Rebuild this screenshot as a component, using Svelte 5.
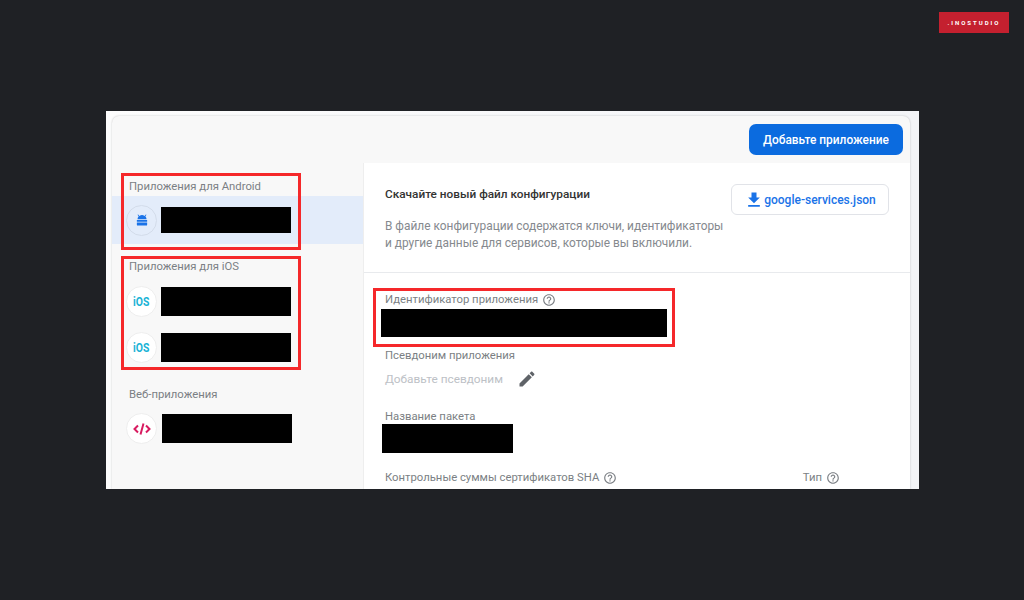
<script lang="ts">
    const help = "M11 18h2v-2h-2v2zm1-16C6.48 2 2 6.48 2 12s4.48 10 10 10 10-4.48 10-10S17.52 2 12 2zm0 18c-4.41 0-8-3.59-8-8s3.59-8 8-8 8 3.59 8 8-3.59 8-8 8zm0-14c-2.21 0-4 1.79-4 4h2c0-1.1.9-2 2-2s2 .9 2 2c0 2-3 1.75-3 5h2c0-2.25 3-2.5 3-5 0-2.21-1.79-4-4-4z";
</script>

<style>
    :global(body) {
        background: #1f2125;
    }

    .page {
        width: 1024px;
        height: 600px;
        overflow: hidden;
        font-family: Roboto, "Liberation Sans", sans-serif;
        font-size: 11.3px;
        color: #7b7f84;
    }

    .page-head {
        height: 111px;
        display: flex;
        justify-content: flex-end;
        align-items: flex-start;
    }

    .logo {
        margin: 12px 15px 0 0;
        width: 70px;
        height: 21px;
        background: #c4202f;
        color: #fff;
        font-size: 6px;
        font-weight: 700;
        letter-spacing: 2px;
        line-height: 21px;
        text-align: center;
    }

    .shot {
        position: relative;
        margin-left: 106px;
        width: 813px;
        height: 378px;
        box-sizing: border-box;
        padding: 5px 9px 0 6px;
        background: linear-gradient(90deg, #fdfdfd 0, #f3f4f7 100%);
        overflow: hidden;
    }

    .console {
        height: 373px;
        background: #f8f8f8;
        border-radius: 7px 7px 0 0;
        box-shadow: 0 0 2px rgba(60, 64, 67, 0.3);
        display: flex;
        flex-direction: column;
    }

    .toolbar {
        height: 47px;
        flex: none;
        box-sizing: border-box;
        padding: 8px 7px 0 0;
        display: flex;
        justify-content: flex-end;
        align-items: flex-start;
    }

    .add {
        width: 154px;
        height: 31px;
        border: none;
        border-radius: 7px;
        background: #0b6bdf;
        color: #fff;
        font: 500 11.9px Roboto, sans-serif;
    }

    .columns {
        flex: 1;
        display: flex;
        min-height: 0;
    }

    .sidebar {
        width: 252px;
        flex: none;
        border-right: 1px solid #eeeeee;
        box-sizing: border-box;
    }

    .group {
        height: 18px;
        line-height: 18px;
        padding-left: 17px;
    }

    .android {
        margin: 15px 0 0;
    }

    .ios {
        margin: 14px 0 2px;
    }

    .web {
        margin: 16px 0 1px;
    }

    .row {
        height: 46px;
        padding-left: 14px;
        display: flex;
        align-items: center;
        gap: 4px;
    }

    .row.active {
        height: 48px;
        background: #e3ecfa;
    }

    .row.shifted {
        height: 47px;
    }

    .circle {
        width: 31px;
        height: 31px;
        flex: none;
        border-radius: 50%;
        background: #fff;
        border: 1px solid #eeeeee;
        box-sizing: border-box;
        display: flex;
        align-items: center;
        justify-content: center;
    }

    .active .circle {
        background: #e3ecfa;
        border-color: #d3dcea;
    }

    .ios-mark {
        color: #1ab3d6;
        font-size: 13px;
        font-weight: 700;
        transform: scaleX(0.8);
    }

    .mask {
        background: #000;
    }

    .row .mask {
        width: 130px;
        height: 29px;
    }

    .row.active .mask {
        height: 26px;
    }

    .row.shifted .mask {
        margin-left: 1px;
    }

    .detail {
        flex: 1;
        background: #fff;
        overflow: hidden;
    }

    .download {
        height: 110px;
        box-sizing: border-box;
        border-bottom: 1px solid #e8eaed;
        padding: 21px 21px 0;
        display: flex;
        justify-content: space-between;
        align-items: flex-start;
    }

    .title {
        margin: 1px 0 15px;
        font-size: 11.8px;
        line-height: 18px;
        font-weight: 500;
        color: #333;
    }

    .note {
        margin: 0;
        width: 346px;
        font-size: 11.9px;
        line-height: 17px;
        color: #85898e;
    }

    .json {
        width: 158px;
        height: 31px;
        flex: none;
        box-sizing: border-box;
        border: 1px solid #e1e3e8;
        border-radius: 6px;
        background: #fff;
        color: #1a73e8;
        font: 500 12px Roboto, sans-serif;
        display: flex;
        align-items: center;
        justify-content: center;
        padding: 0;
    }

    .fields {
        padding: 18px 21px 0;
    }

    .label {
        height: 18px;
        line-height: 18px;
        display: flex;
        align-items: center;
        gap: 4px;
    }

    .id-mask {
        margin-left: -4px;
        width: 286px;
        height: 28px;
    }

    .nick {
        margin-top: 10px;
    }

    .alias {
        margin: 1px 0 16px;
        height: 26px;
        display: flex;
        align-items: center;
        gap: 14px;
        font-size: 11.8px;
        color: #bdc1c6;
    }

    .pkg-mask {
        margin: -2px 0 16px -3px;
        width: 131px;
        height: 29px;
    }

    .sha {
        display: flex;
        justify-content: space-between;
        width: 455px;
    }

    .help {
        display: block;
        fill: #7b7f84;
    }

    .outline {
        position: absolute;
        box-sizing: border-box;
        border: 3px solid #f5282a;
    }

    .outline-android {
        left: 15px;
        top: 62px;
        width: 180px;
        height: 77px;
    }

    .outline-ios {
        left: 15px;
        top: 145px;
        width: 180px;
        height: 114px;
    }

    .outline-id {
        left: 267px;
        top: 177px;
        width: 302px;
        height: 59px;
    }
</style>

<div class="page">
    <header class="page-head">
        <div class="logo">.INOSTUDIO</div>
    </header>

    <div class="shot">
        <div class="console">
            <div class="toolbar">
                <button class="add">Добавьте приложение</button>
            </div>
            <div class="columns">
                <aside class="sidebar">
                    <div class="group android">Приложения для Android</div>
                    <div class="row active">
                        <div class="circle">
                            <svg width="12" height="12" viewBox="0 0 14 14" fill="#1a73e8">
                                <path d="M2.5 0.5 4 2.2A5.5 5.5 0 0 1 10 2.2L11.5 0.5 12.2 1 10.9 2.9C11.6 3.6 12.2 4.6 12.3 6H1.7C1.8 4.6 2.4 3.6 3.1 2.9L1.8 1Z" />
                                <path d="M1 7H13V9H1ZM1 10H13V12.5A1 1 0 0 1 12 13.5H2A1 1 0 0 1 1 12.5Z" />
                            </svg>
                        </div>
                        <div class="mask"></div>
                    </div>

                    <div class="group ios">Приложения для iOS</div>
                    <div class="row">
                        <div class="circle"><span class="ios-mark">iOS</span></div>
                        <div class="mask"></div>
                    </div>
                    <div class="row">
                        <div class="circle"><span class="ios-mark">iOS</span></div>
                        <div class="mask"></div>
                    </div>

                    <div class="group web">Веб-приложения</div>
                    <div class="row shifted">
                        <div class="circle">
                            <svg width="18" height="12" viewBox="0 0 18 12" fill="none" stroke="#d81b60" stroke-width="2">
                                <path d="M5 2.5 1.5 6 5 9.5M13 2.5 16.5 6 13 9.5M10.5 0.5 7.5 11.5" />
                            </svg>
                        </div>
                        <div class="mask"></div>
                    </div>
                </aside>

                <main class="detail">
                    <section class="download">
                        <div>
                            <div class="title">Скачайте новый файл конфигурации</div>
                            <p class="note">В файле конфигурации содержатся ключи, идентификаторы и другие данные для сервисов, которые вы включили.</p>
                        </div>
                        <button class="json">
                            <svg width="20" height="20" viewBox="0 0 24 24" fill="#1a73e8">
                                <path d="M19 9h-4V3H9v6H5l7 7 7-7zM5 18v2h14v-2H5z" />
                            </svg>
                            google-services.json
                        </button>
                    </section>

                    <section class="fields">
                        <div class="label">
                            Идентификатор приложения
                            <svg class="help" width="14" height="14" viewBox="0 0 24 24"><path d={help} /></svg>
                        </div>
                        <div class="mask id-mask"></div>

                        <div class="label nick">Псевдоним приложения</div>
                        <div class="alias">
                            Добавьте псевдоним
                            <svg width="20" height="20" viewBox="0 0 24 24" fill="#5f6368">
                                <path d="M3 17.25V21h3.75L17.81 9.94l-3.75-3.75L3 17.25zM20.71 7.04c.39-.39.39-1.02 0-1.41l-2.34-2.34c-.39-.39-1.02-.39-1.41 0l-1.83 1.83 3.75 3.75 1.83-1.83z" />
                            </svg>
                        </div>

                        <div class="label">Название пакета</div>
                        <div class="mask pkg-mask"></div>

                        <div class="sha">
                            <div class="label">
                                Контрольные суммы сертификатов SHA
                                <svg class="help" width="14" height="14" viewBox="0 0 24 24"><path d={help} /></svg>
                            </div>
                            <div class="label">
                                Тип
                                <svg class="help" width="14" height="14" viewBox="0 0 24 24"><path d={help} /></svg>
                            </div>
                        </div>
                    </section>
                </main>
            </div>
        </div>

        <div class="outline outline-android"></div>
        <div class="outline outline-ios"></div>
        <div class="outline outline-id"></div>
    </div>
</div>
